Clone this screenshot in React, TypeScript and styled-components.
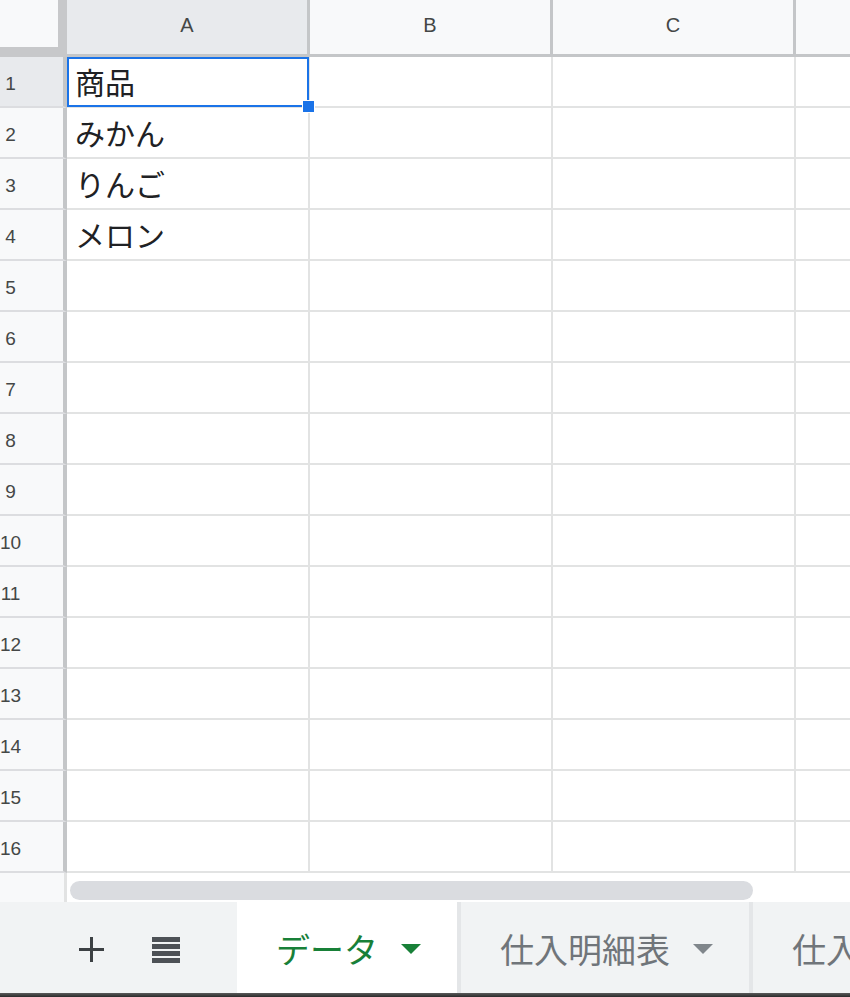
import styled, { createGlobalStyle } from 'styled-components'

const COLUMNS = ['A', 'B', 'C', 'D']
const ROW_COUNT = 16
const CELL_DATA: Record<number, string> = {
  1: '商品',
  2: 'みかん',
  3: 'りんご',
  4: 'メロン',
}
const SHEETS = [
  { name: 'データ', active: true },
  { name: '仕入明細表', active: false },
  { name: '仕入', active: false },
]

const GlobalStyle = createGlobalStyle`
  html, body {
    margin: 0;
    padding: 0;
    background: #ffffff;
    overflow: hidden;
  }
  body {
    font-family: Arial, "Liberation Sans", "Noto Sans CJK JP", sans-serif;
  }
`

const PlusIcon = () => (
  <svg width="27" height="27" viewBox="0 0 27 27">
    <path d="M13.5 1v25M1 13.5h25" stroke="#3c4043" strokeWidth="3" fill="none" />
  </svg>
)

const MenuIcon = () => (
  <svg width="28" height="26" viewBox="0 0 28 26">
    {[0, 7, 14, 21].map(y => (
      <rect key={y} x="0" y={y} width="28" height="5" fill="#4d5156" />
    ))}
  </svg>
)

const Caret = ({ color }: { color: string }) => (
  <svg width="20" height="10" viewBox="0 0 20 10">
    <polygon points="0,0 20,0 10,10" fill={color} />
  </svg>
)

const App = () => {
  const rows = Array.from({ length: ROW_COUNT }, (_, i) => i + 1)

  return (
    <Sheet>
      <GlobalStyle />
      <Grid>
        <HeaderRow>
          <Corner />
          {COLUMNS.map((col, i) => (
            <ColumnHeader key={col} active={col === 'A'}>
              {/* column D sits mostly off screen, its letter is not visible */}
              {i < 3 ? col : ''}
            </ColumnHeader>
          ))}
        </HeaderRow>
        {rows.map(row => (
          <Row key={row}>
            <RowHeader active={row === 1}>
              <RowNumber>{row}</RowNumber>
            </RowHeader>
            {COLUMNS.map(col => (
              <Cell key={col}>
                {col === 'A' && CELL_DATA[row]}
                {col === 'A' && row === 1 && (
                  <Selection>
                    <FillHandle />
                  </Selection>
                )}
              </Cell>
            ))}
          </Row>
        ))}
        <ScrollRow>
          <ScrollCorner />
          <ScrollTrack>
            <ScrollThumb />
          </ScrollTrack>
        </ScrollRow>
      </Grid>
      <TabBar>
        <TabControls>
          <IconButton>
            <PlusIcon />
          </IconButton>
          <IconButton>
            <MenuIcon />
          </IconButton>
        </TabControls>
        {SHEETS.map(sheet => (
          <Tab key={sheet.name} active={sheet.active}>
            <TabName>{sheet.name}</TabName>
            <Caret color={sheet.active ? '#188038' : '#80868b'} />
          </Tab>
        ))}
      </TabBar>
      <BottomEdge />
    </Sheet>
  )
}

export default App

const Sheet = styled.div`
  width: 850px;
  height: 997px;
  display: flex;
  flex-direction: column;
  overflow: hidden;
  background: #ffffff;
`

const Grid = styled.div`
  display: flex;
  flex-direction: column;
  flex-shrink: 0;
`

const HeaderRow = styled.div`
  display: flex;
  height: 57px;
  flex-shrink: 0;
`

const Corner = styled.div`
  width: 67px;
  flex-shrink: 0;
  box-sizing: border-box;
  background: #f8f9fa;
  border-right: 9px solid #c7c8ca;
  border-bottom: 10px solid #c7c8ca;
`

const ColumnHeader = styled.div<{ active: boolean }>`
  width: 243px;
  flex-shrink: 0;
  box-sizing: border-box;
  display: flex;
  align-items: center;
  justify-content: center;
  padding-bottom: 4px;
  background: ${props => (props.active ? '#e8eaed' : '#f8f9fa')};
  border-right: 3px solid #c4c6c8;
  border-bottom: 3px solid #c4c6c8;
  color: #444746;
  font-family: Arial, "Liberation Sans", sans-serif;
  font-size: 20px;
`

const Row = styled.div`
  display: flex;
  height: 51px;
  flex-shrink: 0;
`

const RowHeader = styled.div<{ active: boolean }>`
  width: 67px;
  flex-shrink: 0;
  box-sizing: border-box;
  display: flex;
  align-items: center;
  overflow: hidden;
  padding-top: 4px;
  background: ${props => (props.active ? '#e8eaed' : '#f8f9fa')};
  border-right: 4px solid #c4c6c8;
  border-bottom: 2px solid #dcdde0;
`

const RowNumber = styled.div`
  width: 21px;
  flex-shrink: 0;
  display: flex;
  justify-content: center;
  white-space: nowrap;
  color: #444746;
  font-family: Arial, "Liberation Sans", sans-serif;
  font-size: 19px;
`

const Cell = styled.div`
  position: relative;
  width: 243px;
  flex-shrink: 0;
  box-sizing: border-box;
  display: flex;
  align-items: center;
  padding: 0 0 2px 8px;
  border-right: 2px solid #e2e3e3;
  border-bottom: 2px solid #e2e3e3;
  color: #202124;
  font-family: "Noto Sans CJK JP", sans-serif;
  font-size: 30px;
  white-space: nowrap;
`

const Selection = styled.div`
  position: absolute;
  z-index: 2;
  top: 0;
  left: 0;
  right: -1px;
  bottom: -1px;
  border: 2px solid #1a73e8;
  pointer-events: none;
`

const FillHandle = styled.div`
  position: absolute;
  right: -8px;
  bottom: -8px;
  width: 13px;
  height: 13px;
  box-sizing: border-box;
  background: #1a73e8;
  border: 1px solid #ffffff;
`

const ScrollRow = styled.div`
  display: flex;
  height: 29px;
  flex-shrink: 0;
`

const ScrollCorner = styled.div`
  width: 67px;
  flex-shrink: 0;
  box-sizing: border-box;
  background: #f8f9fa;
  border-right: 3px solid #e2e3e3;
`

const ScrollTrack = styled.div`
  flex: 1;
  padding: 8px 0 0 3px;
  background: #ffffff;
`

const ScrollThumb = styled.div`
  width: 683px;
  height: 19px;
  border-radius: 10px;
  background: #dadce0;
`

const TabBar = styled.div`
  display: flex;
  height: 91px;
  flex-shrink: 0;
  background: #f1f3f4;
`

const TabControls = styled.div`
  width: 237px;
  flex-shrink: 0;
  box-sizing: border-box;
  display: flex;
  align-items: center;
  gap: 47px;
  padding: 4px 0 0 78px;
`

const IconButton = styled.div`
  display: flex;
  align-items: center;
`

const Tab = styled.div<{ active: boolean }>`
  flex-shrink: 0;
  display: flex;
  align-items: center;
  gap: 23px;
  padding: 2px 36px 0 39px;
  background: ${props => (props.active ? '#ffffff' : '#f1f3f4')};
  border-right: 4px solid #e4e6e8;
  color: ${props => (props.active ? '#188038' : '#70757a')};
  font-family: "Noto Sans CJK JP", sans-serif;
  font-size: 34px;
  white-space: nowrap;
`

const TabName = styled.span`
  line-height: 1;
`

const BottomEdge = styled.div`
  height: 4px;
  flex-shrink: 0;
  background: linear-gradient(#5a5a5a, #2a2a2a);
`
